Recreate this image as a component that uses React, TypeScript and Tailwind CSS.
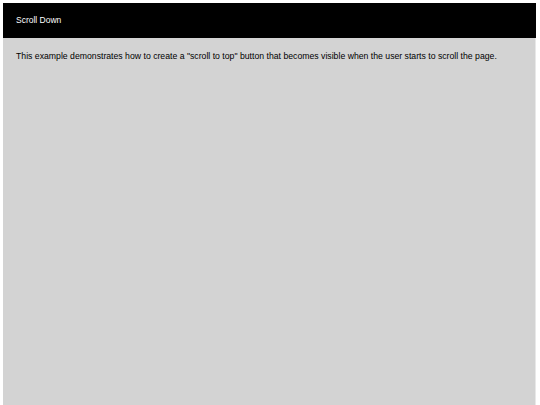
export default function App() {
  return (
    <div className="h-[405px] w-[540px] bg-white pl-[3px] pr-[4px] pt-[3px] font-['Liberation_Sans',Arial,sans-serif]">
      <div className="flex h-full flex-col">
        <header className="flex h-[35px] items-center bg-black px-[13px] text-[8.5px] text-white">
          Scroll Down
        </header>
        <main className="flex-1 border-r border-[#e8e8e8] bg-[#d3d3d3] px-[13px] pt-[12px] text-[8.7px] text-black">
          <p>
            This example demonstrates how to create a "scroll to top" button that becomes visible when the user starts to scroll the page.
          </p>
        </main>
      </div>
    </div>
  );
}
